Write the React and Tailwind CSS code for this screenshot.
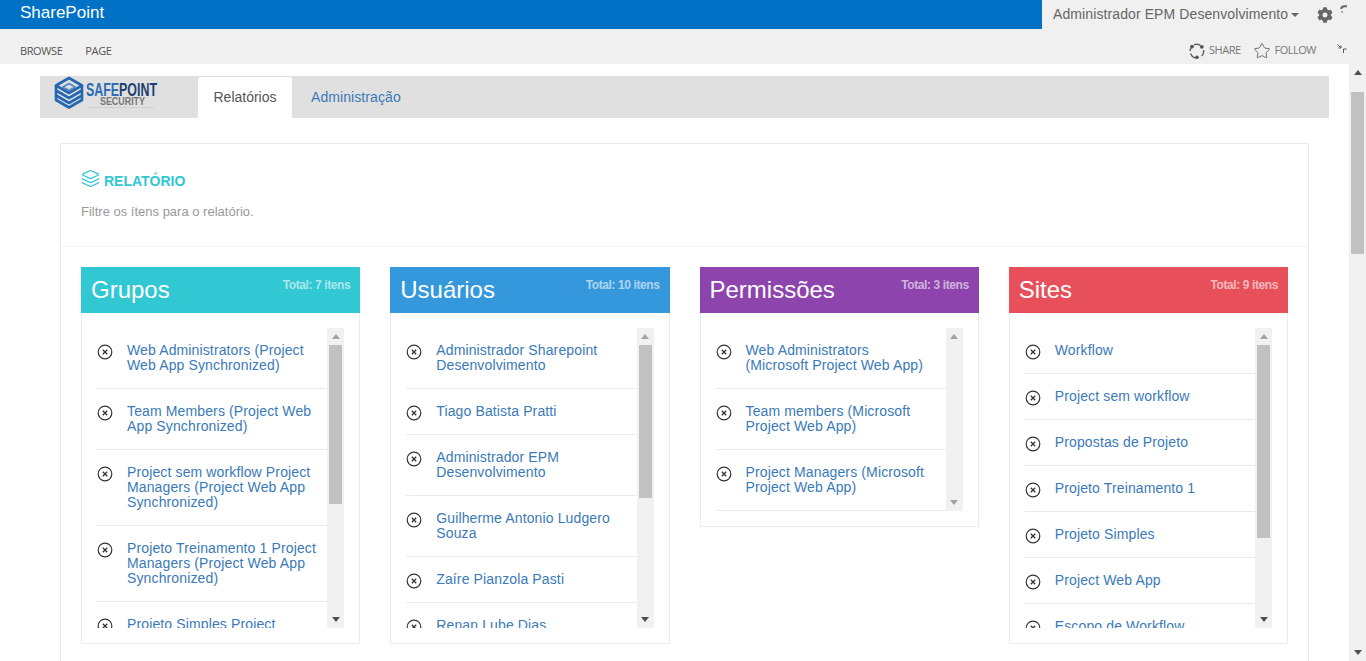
import React from 'react';
import { Star, Layers } from 'lucide-react';
import { FaCog } from 'react-icons/fa';

const panels = [
  {
    title: 'Grupos',
    total: 'Total: 7 itens',
    headerClass: 'bg-[#31c7d3]',
    thumbClass: 'h-[159px]',
    items: [
      'Web Administrators (Project Web App Synchronized)',
      'Team Members (Project Web App Synchronized)',
      'Project sem workflow Project Managers (Project Web App Synchronized)',
      'Projeto Treinamento 1 Project Managers (Project Web App Synchronized)',
      'Projeto Simples Project Managers (Project Web App Synchronized)',
    ],
  },
  {
    title: 'Usuários',
    total: 'Total: 10 itens',
    headerClass: 'bg-[#3598dc]',
    thumbClass: 'h-[153px]',
    items: [
      'Administrador Sharepoint Desenvolvimento',
      'Tiago Batista Pratti',
      'Administrador EPM Desenvolvimento',
      'Guilherme Antonio Ludgero Souza',
      'Zaíre Pianzola Pasti',
      'Renan Lube Dias',
    ],
  },
  {
    title: 'Permissões',
    total: 'Total: 3 itens',
    headerClass: 'bg-[#8e44ad]',
    thumbClass: 'h-0',
    items: [
      'Web Administrators (Microsoft Project Web App)',
      'Team members (Microsoft Project Web App)',
      'Project Managers (Microsoft Project Web App)',
    ],
  },
  {
    title: 'Sites',
    total: 'Total: 9 itens',
    headerClass: 'bg-[#e7505a]',
    thumbClass: 'h-[193px]',
    items: [
      'Workflow',
      'Project sem workflow',
      'Propostas de Projeto',
      'Projeto Treinamento 1',
      'Projeto Simples',
      'Project Web App',
      'Escopo de Workflow',
    ],
  },
];

function RemoveIcon() {
  return (
    <svg width="16" height="16" viewBox="0 0 16 16" fill="none" stroke="#333" className="shrink-0 mt-[1px] mb-[-2px]">
      <circle cx="8" cy="8" r="6.8" strokeWidth="1.2" />
      <path d="M5.8 5.8l4.4 4.4M10.2 5.8l-4.4 4.4" strokeWidth="1.3" />
    </svg>
  );
}

function Scrollbar({ thumbClass, topClass, bottomClass }) {
  return (
    <div className="w-[17px] shrink-0 bg-[#f1f1f1] flex flex-col items-center">
      <div className="h-[17px] flex items-center justify-center shrink-0">
        <div className={`w-0 h-0 border-x-[4px] border-x-transparent border-b-[5px] ${topClass}`} />
      </div>
      <div className={`w-[13px] bg-[#c1c1c1] ${thumbClass}`} />
      <div className="flex-1" />
      <div className="h-[17px] flex items-center justify-center shrink-0">
        <div className={`w-0 h-0 border-x-[4px] border-x-transparent border-t-[5px] ${bottomClass}`} />
      </div>
    </div>
  );
}

function Panel({ panel }) {
  const short = panel.items.length <= 3;
  return (
    <div>
      <div className={`h-[46px] px-[10px] flex justify-between text-white ${panel.headerClass}`}>
        <span className="text-[24px] leading-[46px]">{panel.title}</span>
        <span className="text-[12px] leading-[15px] pt-[11px] font-bold tracking-[-0.4px] text-white/60">{panel.total}</span>
      </div>
      <div className="border border-t-0 border-[#e7ecf1] p-[15px]">
        <div className={`flex overflow-hidden ${short ? 'h-[183px]' : 'h-[300px]'}`}>
          <ul className="flex-1 min-w-0">
            {panel.items.map((item) => (
              <li key={item} className="flex border-b border-[#e7ecf1] py-[15px] text-[14px] leading-[15px]">
                <RemoveIcon />
                <a className="ml-[14px] w-[190px] tracking-[0.13px] text-[#3a7ab8]">{item}</a>
              </li>
            ))}
          </ul>
          <Scrollbar
            thumbClass={panel.thumbClass}
            topClass="border-b-[#a3a3a3]"
            bottomClass={short ? 'border-t-[#a3a3a3]' : 'border-t-[#505050]'}
          />
        </div>
      </div>
    </div>
  );
}

function Logo() {
  return (
    <svg width="110" height="34" viewBox="0 0 110 34" className="ml-[14px]">
      <g fill="none" stroke="#2567b0" strokeWidth="2.6" strokeLinejoin="round">
        <path d="M15 3 L28 10.5 L15 18 L2 10.5 Z" />
        <path d="M2 15.5 L15 23 L28 15.5" />
        <path d="M2 20.5 L15 28 L28 20.5" />
        <path d="M2 10.5 V25 L15 32.5 L28 25 V10.5" />
        <path d="M15 8.5 L21 12 L15 15.5 L9 12 Z" stroke="#4a86c6" strokeWidth="1.6" />
      </g>
      <text x="32" y="21" fontFamily="Liberation Sans" fontWeight="700" fontSize="19" textLength="71" lengthAdjust="spacingAndGlyphs">
        <tspan fill="#2f6db5">SAFE</tspan>
        <tspan fill="#1d3f73">POINT</tspan>
      </text>
      <text x="46" y="30" fontFamily="Liberation Sans" fontWeight="700" fontSize="10.5" fill="#777" textLength="45" lengthAdjust="spacingAndGlyphs">SECURITY</text>
      <path d="M34 32.5H100" stroke="#d2d2d2" />
    </svg>
  );
}

function ShareIcon() {
  return (
    <svg width="16" height="16" viewBox="0 0 16 16" fill="none" className="mr-[4px] ml-[-1px]">
      <path d="M5 1.8A6.8 6.8 0 0 1 11.5 2.4M14.6 7a6.8 6.8 0 0 1-2 6M8.6 14.8A6.8 6.8 0 0 1 1.6 10.4M1.2 8A6.8 6.8 0 0 1 2.6 4" stroke="#666" strokeWidth="1.5" />
      <circle cx="12.8" cy="3.8" r="1.9" fill="#555" />
      <circle cx="3" cy="3.6" r="1.9" fill="#555" />
      <circle cx="8" cy="14.2" r="1.8" fill="#555" />
    </svg>
  );
}

export default function App() {
  return (
    <div className="h-[661px] w-[1366px] overflow-hidden flex flex-col bg-white font-['Liberation_Sans',Arial,sans-serif] text-[#333]">
      {/* suite bar */}
      <div className="h-[29px] flex shrink-0">
        <div className="w-[1042px] bg-[#0072c6] text-white text-[17px] leading-[25px] pl-[20px]">SharePoint</div>
        <div className="flex-1 bg-[#f0f0f0] flex items-center pl-[11px] text-[#666] overflow-hidden">
          <span className="text-[14px] tracking-[0.1px]">Administrador EPM Desenvolvimento</span>
          <div className="ml-[3px] mt-[1px] w-0 h-0 border-x-[4px] border-x-transparent border-t-[4px] border-t-[#666]" />
          <FaCog size={16} className="ml-[18px] text-[#666]" />
          <svg width="8" height="8" viewBox="0 0 8 8" fill="none" className="ml-[7px] mb-[11px]">
            <path d="M1.2 4C1.2 2 3 1.2 4.5 1.2H7M2 6.5V7.5" stroke="#666" strokeWidth="2" />
          </svg>
        </div>
      </div>

      {/* ribbon */}
      <div className="h-[35px] shrink-0 bg-[#f0f0f0] flex items-center pt-[10px] text-[11px] text-[#555] font-['Open_Sans',sans-serif] pl-[20px]">
        <span className="tracking-[-0.4px]">BROWSE</span>
        <span className="ml-[23px] tracking-[-0.4px]">PAGE</span>
        <div className="ml-auto flex items-center text-[#777] mr-[19px] mt-[-2px]">
          <ShareIcon />
          <span className="tracking-[-0.5px]">SHARE</span>
          <Star size={18} strokeWidth={1.1} className="ml-[12px] mr-[4px] text-[#555]" />
          <span className="tracking-[-0.5px]">FOLLOW</span>
          <svg width="10" height="10" viewBox="0 0 10 10" fill="none" stroke="#555" className="ml-[21px] mb-[4px]">
            <path d="M0.5 0.5L4 4M4 1.5V4H1.5M9.5 5H6.5V9" />
          </svg>
        </div>
      </div>

      {/* scrolling page */}
      <div className="flex-1 flex min-h-0">
        <main className="flex-1 min-w-0 pt-[12px] pl-[40px] pr-[20px]">
          <div className="h-[42px] bg-[#e0e0e0] flex">
            <div className="w-[158px] mt-[-1px]"><Logo /></div>
            <div className="h-[41px] mt-[1px] w-[94px] bg-white rounded-t-[3px] text-[14px] text-[#555] flex items-center justify-center">Relatórios</div>
            <div className="ml-[19px] text-[14px] tracking-[0.08px] text-[#3a7ab8] flex items-center">Administração</div>
          </div>

          <div className="mt-[25px] mx-[20px] border border-[#e7ecf1]">
            <div className="h-[103px] border-b border-[#eef1f5] px-[20px] pt-[25px]">
              <div className="flex items-center h-[22px]">
                <Layers size={19} strokeWidth={1.6} className="text-[#31c7d3] mb-[3px]" />
                <span className="ml-[4px] mt-[2px] text-[14px] font-bold text-[#31c7d3]">RELATÓRIO</span>
              </div>
              <p className="mt-[13px] text-[13px] leading-[15px] text-[#999]">Filtre os ítens para o relatório.</p>
            </div>
            <div className="grid grid-cols-4 gap-[30px] p-[20px]">
              {panels.map((panel) => (
                <Panel key={panel.title} panel={panel} />
              ))}
            </div>
          </div>
        </main>
        <Scrollbar thumbClass="h-[162px] mt-[11px]" topClass="border-b-[#505050]" bottomClass="border-t-[#505050]" />
      </div>
    </div>
  );
}
